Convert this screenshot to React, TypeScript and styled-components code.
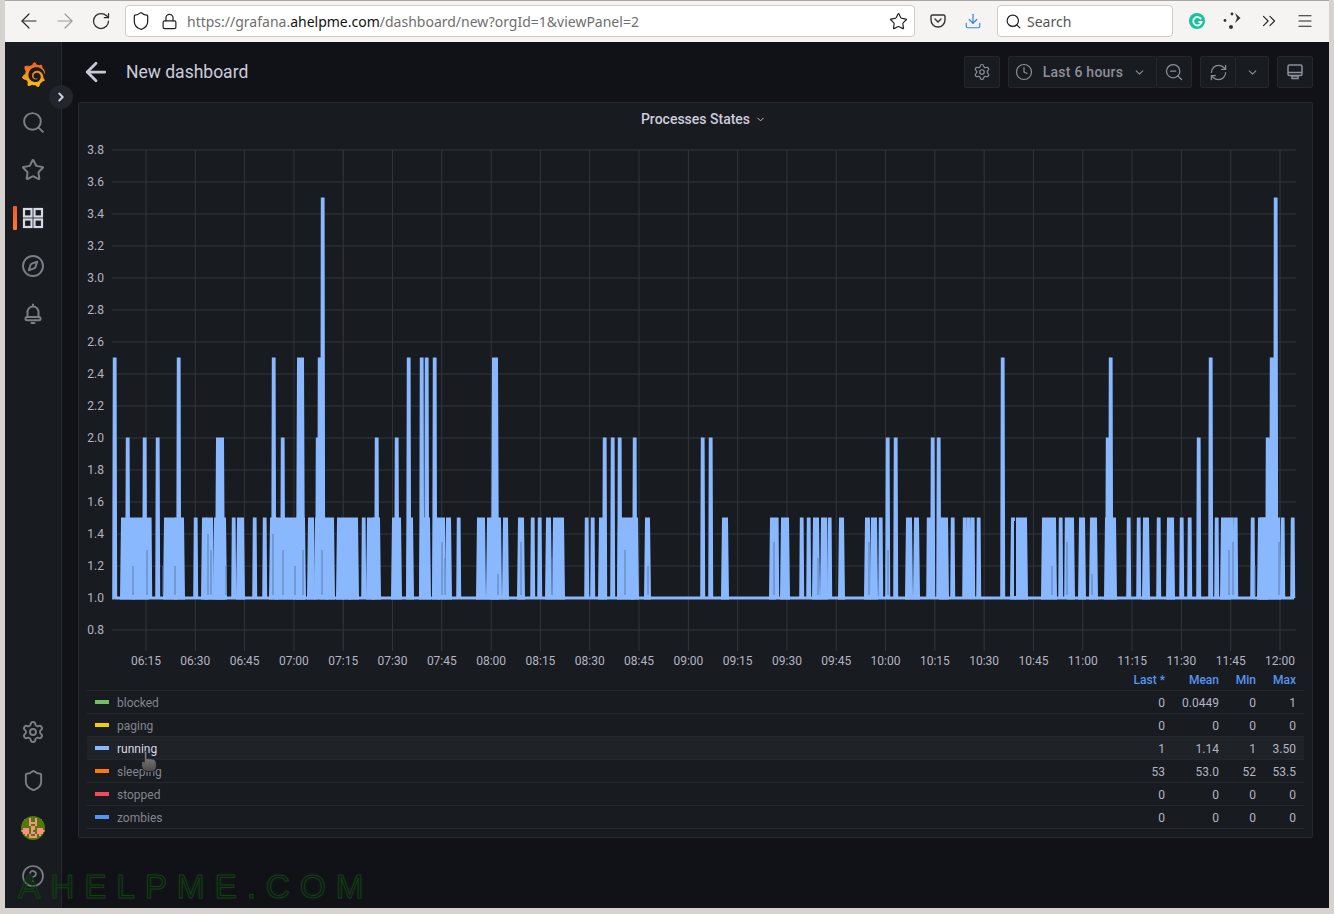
import React from "react";
import styled, { createGlobalStyle } from "styled-components";
import {
  ArrowLeft,
  ArrowRight,
  ChevronDown,
  ChevronRight,
  ChevronsRight,
  CircleHelp,
  Clock,
  Compass,
  Download,
  Lock,
  Menu,
  RefreshCw,
  RotateCw,
  Search,
  Settings,
  Shield,
  Star,
  ZoomOut,
} from "lucide-react";
import { SiGrafana } from "react-icons/si";

const GlobalStyle = createGlobalStyle`
  html, body { margin: 0; padding: 0; background: #d6d3ce; }
  body { font-family: Roboto, "Liberation Sans", sans-serif; overflow: hidden; }
`;

/* ===================== chart data ===================== */
const yFor = (v: number) => 598 - (v - 1) * 160;

// [x, level] narrow spikes
const spikes: [number, number][] = [
  [114, 2.5], [127, 2], [144, 2], [149, 1.5], [157, 2], [178, 2.5], [195, 1.5], [233, 1.5], [254, 1.5], [264, 1.5],
  [273, 2.5], [282, 2], [317, 2], [319, 2.5], [322, 3.5], [363, 1.5], [376, 2], [396, 2], [408, 2.5], [421, 2.5],
  [426, 2.5], [434, 2.5], [458, 1.5], [532, 1.5], [539, 1.5], [586, 1.5], [592, 1.5], [604, 2], [612, 2], [619, 2],
  [634, 2], [702, 2], [710, 2], [776, 1.5], [801, 1.5], [808, 1.5], [829, 1.5], [880, 1.5], [887, 2], [895, 2],
  [928, 1.5], [932, 2], [938, 2], [952, 1.5], [964, 1.5], [968, 1.5], [972, 1.5], [978, 1.5], [1002, 2.5], [1060, 1.5],
  [1066, 1.5], [1107, 2], [1110, 2.5], [1128, 1.5], [1138, 1.5], [1158, 1.5], [1181, 1.5], [1189, 1.5], [1198, 2],
  [1210, 2.5], [1216, 1.5], [1231, 1.5], [1235, 1.5], [1252, 1.5], [1267, 2], [1271, 2.5], [1275, 3.5], [1282, 1.5],
  [1292, 1.5],
];

// [from, to, level] solid runs
const blocks: [number, number, number][] = [
  [122, 132, 1.5], [135, 146, 1.5], [165, 174, 1.5], [176, 182, 1.5], [203, 205, 1.5], [207, 211, 1.5], [215, 224, 1.5],
  [217, 222, 2], [238, 242, 1.5], [271, 275, 1.5], [277, 292, 1.5], [295, 303, 1.5], [298, 302, 2.5], [309, 312, 1.5],
  [316, 325, 1.5], [328, 332, 1.5], [338, 341, 1.5], [344, 348, 1.5], [351, 356, 1.5], [368, 372, 1.5], [374, 378, 1.5],
  [393, 399, 1.5], [408, 411, 1.5], [421, 428, 1.5], [434, 437, 1.5], [440, 443, 1.5], [447, 449, 1.5], [478, 483, 1.5],
  [488, 499, 1.5], [493, 496, 2.5], [504, 506, 1.5], [519, 522, 1.5], [547, 549, 1.5], [554, 562, 1.5], [600, 604, 1.5],
  [619, 631, 1.5], [633, 636, 1.5], [646, 648, 1.5], [723, 726, 1.5], [771, 773, 1.5], [782, 787, 1.5], [814, 817, 1.5],
  [822, 825, 1.5], [840, 842, 1.5], [866, 868, 1.5], [872, 875, 1.5], [907, 910, 1.5], [915, 917, 1.5], [941, 946, 1.5],
  [1012, 1013, 1.5], [1017, 1025, 1.5], [1043, 1054, 1.5], [1069, 1072, 1.5], [1080, 1083, 1.5], [1091, 1095, 1.5],
  [1106, 1114, 1.5], [1144, 1147, 1.5], [1168, 1172, 1.5], [1222, 1228, 1.5], [1259, 1265, 1.5], [1261, 1278, 1.5],
];

// [x, top level] darker streaks inside the dense runs
const streaks: [number, number][] = [
  [133, 1.2], [147, 1.3], [163, 1.2], [175, 1.2], [208, 1.4], [211, 1.3], [226, 1.2], [273, 1.4], [283, 1.3],
  [295, 1.2], [303, 1.3], [322, 1.3], [442, 1.35], [445, 1.25], [498, 1.15], [521, 1.35], [552, 1.25], [625, 1.3],
  [648, 1.2], [774, 1.35], [818, 1.25], [869, 1.35], [888, 1.3], [1052, 1.2], [1067, 1.35], [1092, 1.15], [1229, 1.3],
  [1233, 1.35], [1255, 1.2], [1279, 1.35],
];

// [from, to] top edge of the run after 10:30, where the line stays at 1.5
const flats: [number, number][] = [[1012, 1017]];

const ticks = [
  "06:15", "06:30", "06:45", "07:00", "07:15", "07:30", "07:45", "08:00", "08:15", "08:30", "08:45", "09:00",
  "09:15", "09:30", "09:45", "10:00", "10:15", "10:30", "10:45", "11:00", "11:15", "11:30", "11:45", "12:00",
];

const yLevels = ["3.8", "3.6", "3.4", "3.2", "3.0", "2.8", "2.6", "2.4", "2.2", "2.0", "1.8", "1.6", "1.4", "1.2", "1.0", "0.8"];

type Row = { name: string; color: string; last: string; mean: string; min: string; max: string; active?: boolean };

const rows: Row[] = [
  { name: "blocked", color: "#73bf69", last: "0", mean: "0.0449", min: "0", max: "1" },
  { name: "paging", color: "#f2cc0c", last: "0", mean: "0", min: "0", max: "0" },
  { name: "running", color: "#8ab8ff", last: "1", mean: "1.14", min: "1", max: "3.50", active: true },
  { name: "sleeping", color: "#ff780a", last: "53", mean: "53.0", min: "52", max: "53.5" },
  { name: "stopped", color: "#f2495c", last: "0", mean: "0", min: "0", max: "0" },
  { name: "zombies", color: "#5794f2", last: "0", mean: "0", min: "0", max: "0" },
];

const avatarPixels = [
  "............",
  ".#..#..#..#.",
  "....#..#....",
  "....####....",
  "....#..#....",
  ".....##.....",
  ".###.##.###.",
  "####.#..####",
  ".###.##.###.",
  "..#.#..#.#..",
  "....####....",
  "............",
];

const Chart = () => {
  const base = yFor(1);
  const line =
    "M114," + base + " " +
    spikes
      .map(([sx, v]) => {
        const x = sx + 0.7;
        const top = yFor(v) + 1;
        return `L${x - 1},${base} L${x - 0.4},${top} L${x + 0.4},${top} L${x + 1},${base}`;
      })
      .join(" ") +
    " L1294," + base;
  return (
    <ChartSvg viewBox="78 140 1235 530" width="1235" height="530">
      {yLevels.map((l, i) => (
        <g key={l}>
          <line x1="112" x2="1296" y1={150 + i * 32} y2={150 + i * 32} stroke="#33363b" />
          <AxisText x="104" y={154 + i * 32} textAnchor="end">{l}</AxisText>
        </g>
      ))}
      {ticks.map((t, i) => {
        const x = 146 + (i * (1280 - 146)) / 23;
        return (
          <g key={t}>
            <line x1={x} x2={x} y1="150" y2="651" stroke="#33363b" />
            <AxisText x={x} y="665" textAnchor="middle">{t}</AxisText>
          </g>
        );
      })}
      {blocks.map(([a, b, v], i) => (
        <polygon
          key={i}
          points={`${a - 0.5},${base} ${a + 0.5},${yFor(v) + 1} ${b + 0.5},${yFor(v) + 1} ${b + 1.5},${base}`}
          fill="#8ab8ff"
          stroke="#8ab8ff"
          strokeWidth="3"
        />
      ))}
      <path d={line} fill="none" stroke="#8ab8ff" strokeWidth="3" strokeLinejoin="miter" />
      {streaks.map(([x, v], i) => (
        <line key={i} x1={x} x2={x} y1={yFor(v)} y2={base - 3} stroke="#5a7cab" strokeWidth="1" />
      ))}
      {flats.map(([a, b], i) => (
        <rect key={i} x={a + 2} y={yFor(1.5) + 3} width={b - a - 3} height={base - yFor(1.5) - 5} fill="#181b1f" />
      ))}
    </ChartSvg>
  );
};

const App = () => (
  <Screen>
    <GlobalStyle />
    <HiddenDefs width="0" height="0">
      <defs>
        <linearGradient id="grafanaGrad" x1="0" y1="1" x2="0" y2="0">
          <stop offset="0" stopColor="#fcc30f" />
          <stop offset="1" stopColor="#f05a28" />
        </linearGradient>
        <linearGradient id="handGrad" x1="0" y1="0" x2="0" y2="1">
          <stop offset="0" stopColor="#8a8a8a" />
          <stop offset="1" stopColor="#4a4a4a" />
        </linearGradient>
        <clipPath id="avatarClip">
          <circle cx="12" cy="12" r="12" />
        </clipPath>
      </defs>
    </HiddenDefs>

    <BrowserBar>
      <NavIcon><ArrowLeft size={24} strokeWidth={1.2} /></NavIcon>
      <NavIcon $dim><ArrowRight size={24} strokeWidth={1.2} /></NavIcon>
      <NavIcon><RotateCw size={20} strokeWidth={1.5} /></NavIcon>
      <UrlBox>
        <Shield size={20} strokeWidth={1.5} color="#222" />
        <Lock size={17} strokeWidth={1.7} color="#222" />
        <UrlText>
          https://grafana.<b>ahelpme.com</b>/dashboard/new?orgId=1&amp;viewPanel=2
        </UrlText>
        <Star size={19} strokeWidth={1.5} color="#222" />
      </UrlBox>
      <BarIcon $gap={15}>
        <svg width="16" height="16" viewBox="0 0 16 16" fill="none" stroke="#333" strokeWidth="1.4">
          <path d="M2.5 2h11A1.5 1.5 0 0 1 15 3.5V7A7 7 0 0 1 1 7V3.5A1.5 1.5 0 0 1 2.5 2z" />
          <path d="M5 6l3 3 3-3" strokeLinecap="round" />
        </svg>
      </BarIcon>
      <BarIcon $gap={18}><Download size={18} strokeWidth={1.6} color="#3a84e8" /></BarIcon>
      <SearchBox>
        <Search size={17} strokeWidth={1.7} color="#222" />
        <span>Search</span>
      </SearchBox>
      <ExtIcons>
        <Grammarly>
          <svg width="11" height="11" viewBox="0 0 12 12" fill="none" stroke="#fff" strokeWidth="2">
            <path d="M10 3.5A4.6 4.6 0 1 0 10.500 6.500H7" />
          </svg>
        </Grammarly>
        <svg width="22" height="20" viewBox="0 0 22 20" fill="#333">
          <circle cx="11" cy="3" r="1.4" />
          <circle cx="4" cy="9.5" r="1.4" />
          <circle cx="10" cy="16" r="2" />
          <path d="M14 2l5.500 5-5.500 5 2-5z" />
        </svg>
        <ChevronsRight size={22} strokeWidth={1.2} color="#222" />
        <Menu size={18} strokeWidth={1.5} color="#222" />
      </ExtIcons>
    </BrowserBar>

    <Body>
      <SideNav>
        <Expander><ChevronRight size={14} strokeWidth={3.4} /></Expander>
        <TopGroup>
          <LogoSlot><LogoIcon size={25} /></LogoSlot>
          <NavItem><Search size={25} strokeWidth={1.9} /></NavItem>
          <NavItem><Star size={24} strokeWidth={2} /></NavItem>
          <NavItem $active>
            <svg width="22" height="22" viewBox="0 0 22 22" fill="none" stroke="#d8d9e6" strokeWidth="2.2">
              <rect x="2" y="2" width="7.5" height="7.5" />
              <rect x="12.5" y="2" width="7.5" height="7.5" />
              <rect x="2" y="12.5" width="7.5" height="7.5" />
              <rect x="12.5" y="12.5" width="7.5" height="7.5" />
            </svg>
          </NavItem>
          <NavItem><Compass size={24} strokeWidth={1.9} /></NavItem>
          <NavItem>
            <svg width="24" height="24" viewBox="0 0 24 24" fill="none" stroke="currentColor" strokeWidth="2" strokeLinecap="round">
              <path d="M12 2.500v1.500M6.500 15v-5a5.500 5.500 0 0 1 11 0v5" />
              <rect x="4.500" y="15" width="15" height="3.200" rx="1.500" />
              <path d="M10.500 21h3" />
            </svg>
          </NavItem>
        </TopGroup>
        <BottomGroup>
          <NavItem><Settings size={24} strokeWidth={1.9} /></NavItem>
          <NavItem><Shield size={23} strokeWidth={2} /></NavItem>
          <NavItem>
            <svg width="24" height="24" viewBox="0 0 24 24">
              <circle cx="12" cy="12" r="12" fill="#4f7a0c" />
              <g clipPath="url(#avatarClip)">
                {avatarPixels.map((row, y) =>
                  row.split("").map((c, x) =>
                    c === "#" ? <rect key={`${x}-${y}`} x={x * 2} y={y * 2} width="2.02" height="2.02" fill="#fb8f80" /> : null
                  )
                )}
              </g>
            </svg>
          </NavItem>
          <NavItem><CircleHelp size={24} strokeWidth={1.7} /></NavItem>
        </BottomGroup>
      </SideNav>

      <Main>
        <TopRow>
          <BackArrow><ArrowLeft size={30} strokeWidth={2.2} /></BackArrow>
          <Title>New dashboard</Title>
          <ToolGroup>
            <ToolBtn $square><Settings size={18} strokeWidth={1.6} /></ToolBtn>
          </ToolGroup>
          <ToolGroup>
            <RangeBtn>
              <Clock size={18} strokeWidth={1.6} />
              <RangeText>Last 6 hours</RangeText>
              <ChevronDown size={13} strokeWidth={2} />
            </RangeBtn>
            <ToolBtn $square><ZoomOut size={20} strokeWidth={1.5} /></ToolBtn>
          </ToolGroup>
          <ToolGroup>
            <ToolBtn $square><RefreshCw size={19} strokeWidth={1.5} /></ToolBtn>
            <ToolBtn><ChevronDown size={13} strokeWidth={2} /></ToolBtn>
          </ToolGroup>
          <ToolGroup>
            <ToolBtn $square>
              <svg width="18" height="18" viewBox="0 0 18 18" fill="none" stroke="currentColor" strokeWidth="1.5">
                <rect x="2" y="2" width="14" height="10.500" rx="1.500" />
                <path d="M2 9.500h14" />
                <rect x="6" y="13" width="6" height="2.500" />
              </svg>
            </ToolBtn>
          </ToolGroup>
        </TopRow>

        <Panel>
          <PanelTitle>
            Processes States <ChevronDown size={11} strokeWidth={2} />
          </PanelTitle>
          <Chart />
          <LegendHead>
            <HeadCell $w={0} $grow />
            <HeadCell $w={60}>Last *</HeadCell>
            <HeadCell $w={54}>Mean</HeadCell>
            <HeadCell $w={37}>Min</HeadCell>
            <HeadCell $w={40}>Max</HeadCell>
          </LegendHead>
          {rows.map((r) => (
            <LegendRow key={r.name} $active={r.active}>
              <Swatch $color={r.color} />
              <SeriesName $active={r.active}>{r.name}</SeriesName>
              <ValueCell $w={60}>{r.last}</ValueCell>
              <ValueCell $w={54}>{r.mean}</ValueCell>
              <ValueCell $w={37}>{r.min}</ValueCell>
              <ValueCell $w={40}>{r.max}</ValueCell>
            </LegendRow>
          ))}
          <HandCursor viewBox="0 0 15 20" width="16" height="21">
            <path
              d="M3 1.5c0-1.600 2.500-1.600 2.500 0V7.500c1-.8 2-.6 2.500 0 .8-.5 1.800-.3 2.300.3.800-.4 2-.1 2.700.7.8.8 1.500 2 1.500 4V15c0 2.500-2 4.500-4.500 4.500H6C3.500 19.500 1 17.500.5 15L.5 11c0-1.200 1.500-1.400 2.500-.4z"
              fill="url(#handGrad)"
              stroke="#1a1a1a"
              strokeWidth="0.8"
            />
          </HandCursor>
        </Panel>
      </Main>
      <Watermark>AHELPME.COM</Watermark>
    </Body>
  </Screen>
);

export default App;

/* ===================== styles ===================== */
const Screen = styled.div`
  position: relative;
  width: 1334px;
  height: 914px;
  box-sizing: border-box;
  padding: 0 5px 6px;
  display: flex;
  flex-direction: column;
  background: #d6d3ce;
  overflow: hidden;
`;

const HiddenDefs = styled.svg`
  position: absolute;
`;

const BrowserBar = styled.header`
  flex: none;
  height: 42px;
  box-sizing: border-box;
  border-top: 1px solid #a9a7a3;
  background: #f5f4f2;
  display: flex;
  align-items: center;
  padding: 0 0 1px 6px;
`;

const NavIcon = styled.span<{ $dim?: boolean }>`
  width: 36px;
  display: flex;
  justify-content: center;
  color: ${({ $dim }) => ($dim ? "#9a9a9a" : "#2a2a2a")};
`;

const UrlBox = styled.div`
  width: 790px;
  height: 32px;
  margin-left: 6px;
  box-sizing: border-box;
  border: 1px solid #cfcac2;
  border-radius: 4px;
  background: #fff;
  display: flex;
  align-items: center;
  gap: 9.5px;
  padding: 0 6px 0 5px;
`;

const UrlText = styled.span`
  flex: 1;
  font-family: "Noto Sans", sans-serif;
  font-size: 14px;
  color: #6f6f6f;
  white-space: nowrap;
  b {
    font-weight: 400;
    color: #111;
  }
`;

const BarIcon = styled.span<{ $gap: number }>`
  display: flex;
  margin-left: ${({ $gap }) => $gap}px;
`;

const SearchBox = styled.div`
  width: 176px;
  height: 32px;
  margin-left: 15px;
  box-sizing: border-box;
  border: 1px solid #cfcac2;
  border-radius: 4px;
  background: #fff;
  display: flex;
  align-items: center;
  gap: 5px;
  padding-left: 7px;
  font-family: "Noto Sans", sans-serif;
  font-size: 14px;
  color: #555;
`;

const ExtIcons = styled.div`
  display: flex;
  align-items: center;
  gap: 15.5px;
  margin-left: 16px;
`;

const Grammarly = styled.span`
  width: 16px;
  height: 16px;
  border-radius: 50%;
  background: #15c39a;
  display: flex;
  align-items: center;
  justify-content: center;
`;

const Body = styled.div`
  position: relative;
  flex: 1;
  min-height: 0;
  display: flex;
  background: #111217;
  overflow: hidden;
`;

const SideNav = styled.nav`
  position: relative;
  flex: none;
  width: 57px;
  box-sizing: border-box;
  background: #181b1f;
  border-right: 1px solid #25272c;
  display: flex;
  flex-direction: column;
  justify-content: space-between;
  color: #7b7e86;
`;

const Expander = styled.span`
  position: absolute;
  top: 43px;
  left: 44px;
  width: 24px;
  height: 24px;
  border-radius: 50%;
  background: #22252b;
  color: #ccccdc;
  display: flex;
  align-items: center;
  justify-content: center;
  z-index: 2;
`;

const TopGroup = styled.div`
  display: flex;
  flex-direction: column;
`;

const BottomGroup = styled.div`
  display: flex;
  flex-direction: column;
  padding-bottom: 8px;
`;

const LogoSlot = styled.div`
  height: 56px;
  padding-top: 8px;
  box-sizing: border-box;
  display: flex;
  align-items: center;
  justify-content: center;
`;

const LogoIcon = styled(SiGrafana)`
  fill: url(#grafanaGrad);
`;

const NavItem = styled.div<{ $active?: boolean }>`
  position: relative;
  height: 48px;
  display: flex;
  align-items: center;
  justify-content: center;
  ${({ $active }) =>
    $active &&
    `&::before {
      content: "";
      position: absolute;
      left: 8px;
      top: 12px;
      width: 4px;
      height: 24px;
      border-radius: 1px;
      background: linear-gradient(180deg, #f05a28, #ff7a2f);
    }`}
`;

const Main = styled.main`
  flex: 1;
  min-width: 0;
  box-sizing: border-box;
  padding: 14px 16px 0 16px;
  display: flex;
  flex-direction: column;
`;

const TopRow = styled.div`
  height: 32px;
  margin-bottom: 14px;
  display: flex;
  align-items: center;
  gap: 8px;
`;

const BackArrow = styled.span`
  display: flex;
  margin-left: 3px;
  color: #c8c9d6;
`;

const Title = styled.h1`
  flex: 1;
  margin: 0 0 0 7px;
  font-size: 17.5px;
  font-weight: 400;
  color: #ccccdc;
`;

const ToolGroup = styled.div`
  display: flex;
  margin-left: 1px;
`;

const ToolBtn = styled.button<{ $square?: boolean }>`
  width: ${({ $square }) => ($square ? 36 : 34)}px;
  height: 32px;
  box-sizing: border-box;
  margin-left: -1px;
  padding: 0;
  border: 1px solid #25272c;
  border-radius: 2px;
  background: #181b1f;
  color: #8e8f9b;
  font-family: Roboto, sans-serif;
  display: flex;
  align-items: center;
  justify-content: center;
`;

const RangeBtn = styled(ToolBtn)`
  width: 149px;
  padding: 0 10px 0 6px;
  justify-content: space-between;
`;

const RangeText = styled.span`
  font-size: 14px;
  font-weight: 500;
  letter-spacing: 0.25px;
  color: #8e8f9b;
`;

const Panel = styled.section`
  position: relative;
  width: 1235px;
  height: 736px;
  box-sizing: border-box;
  background: #181b1f;
  border: 1px solid #25272c;
  border-radius: 2px;
  display: flex;
  flex-direction: column;
  align-items: stretch;
`;

const PanelTitle = styled.div`
  height: 37px;
  padding: 0 0 5px 16px;
  box-sizing: border-box;
  display: flex;
  align-items: center;
  justify-content: center;
  gap: 5px;
  font-size: 14px;
  font-weight: 500;
  color: #ccccdc;
`;

const ChartSvg = styled.svg`
  display: block;
  flex: none;
  margin-left: -1px;
`;

const AxisText = styled.text`
  font-family: Roboto, sans-serif;
  font-size: 12px;
  fill: #b4b5c4;
`;

const LegendHead = styled.div`
  height: 21px;
  margin: 0 8px;
  box-sizing: border-box;
  display: flex;
  align-items: center;
  border-bottom: 1px solid #24272b;
`;

const HeadCell = styled.span<{ $w: number; $grow?: boolean }>`
  flex: ${({ $grow }) => ($grow ? 1 : "none")};
  width: ${({ $w }) => $w}px;
  box-sizing: border-box;
  padding-right: 8px;
  text-align: right;
  font-size: 12px;
  font-weight: 500;
  color: #5794f2;
`;

const LegendRow = styled.div<{ $active?: boolean }>`
  height: 23px;
  margin: 0 8px;
  box-sizing: border-box;
  display: flex;
  align-items: center;
  border-bottom: 1px solid #24272b;
  background: ${({ $active }) => ($active ? "#1f2227" : "transparent")};
`;

const Swatch = styled.span<{ $color: string }>`
  flex: none;
  width: 14px;
  height: 4px;
  margin-left: 8px;
  background: ${({ $color }) => $color};
`;

const SeriesName = styled.span<{ $active?: boolean }>`
  flex: 1;
  margin-left: 8px;
  padding-top: 2px;
  font-size: 12px;
  color: ${({ $active }) => ($active ? "#d8d9e6" : "#84858f")};
`;

const ValueCell = styled.span<{ $w: number }>`
  flex: none;
  width: ${({ $w }) => $w}px;
  box-sizing: border-box;
  padding: 2px 8px 0 0;
  text-align: right;
  font-size: 12px;
  color: #b4b5c4;
`;

const HandCursor = styled.svg`
  position: absolute;
  left: 62px;
  top: 648px;
`;

const Watermark = styled.div`
  position: absolute;
  left: 13px;
  top: 826px;
  font-family: "Liberation Sans", sans-serif;
  font-size: 33.5px;
  letter-spacing: 9.8px;
  color: transparent;
  -webkit-text-stroke: 1px #123f14;
  text-shadow: 0 0 4px rgba(20, 80, 20, 0.25);
  pointer-events: none;
`;
